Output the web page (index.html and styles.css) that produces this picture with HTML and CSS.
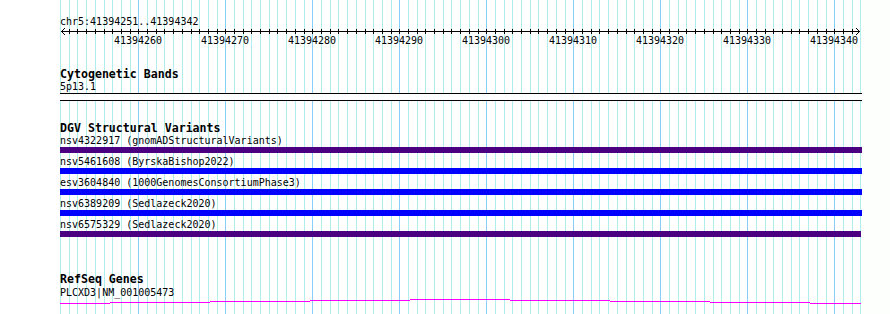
FILE: index.html
```html
<!DOCTYPE html>
<html lang="en">
<head>
<meta charset="UTF-8" />
<title>chr5:41394251..41394342</title>
<link rel="stylesheet" href="styles.css">
</head>
<body>
  <div class="browser">
    <svg class="grid" id="grid" width="862" height="314"></svg>

    <div class="ruler">
      <div class="label">chr5:41394251..41394342</div>
      <svg class="axis" id="axis" width="802" height="8"></svg>
      <div class="ticklabels" id="ticklabels"></div>
    </div>

    <div class="track cyto">
      <div class="track-title">Cytogenetic Bands</div>
      <div class="label">5p13.1</div>
      <div class="band"></div>
    </div>

    <div class="track dgv">
      <div class="track-title">DGV Structural Variants</div>
      <div class="feature">
        <div class="label">nsv4322917 (gnomADStructuralVariants)</div>
        <div class="bar gainloss"></div>
      </div>
      <div class="feature">
        <div class="label">nsv5461608 (ByrskaBishop2022)</div>
        <div class="bar gain"></div>
      </div>
      <div class="feature">
        <div class="label">esv3604840 (1000GenomesConsortiumPhase3)</div>
        <div class="bar gain"></div>
      </div>
      <div class="feature">
        <div class="label">nsv6389209 (Sedlazeck2020)</div>
        <div class="bar gain"></div>
      </div>
      <div class="feature">
        <div class="label">nsv6575329 (Sedlazeck2020)</div>
        <div class="bar gainloss short"></div>
      </div>
    </div>

    <div class="track refseq">
      <div class="track-title">RefSeq Genes</div>
      <div class="label">PLCXD3|NM_001005473</div>
      <!-- intron line, drawn as a stepped hat -->
      <svg class="gene" width="802" height="8">
        <path d="M0 5.5H50M50 4.5H150M150 3.5H250M250 2.5H350M350 1.5H450M450 2.5H550M550 3.5H650M650 4.5H750M750 5.5H801"/>
      </svg>
    </div>
  </div>

  <script>
    var start = 41394251, end = 41394342;
    var left = 60, bp = 8.7;

    var grid = document.getElementById("grid");
    var axis = document.getElementById("axis");
    var labels = document.getElementById("ticklabels");

    var minor = "", major = "", ticks = "", text = "";
    for (var k = 0; k <= end - start + 1; k++) {
      var x = Math.round(k * bp);
      if ((start + k) % 10 == 0) {
        major += "M" + (x + left + 0.5) + " 0V314";
        text += '<span style="left:' + x + 'px">' + (start + k) + '</span>';
      } else {
        minor += "M" + (x + left + 0.5) + " 0V314";
      }
      if (k > 0 && k <= end - start) {
        ticks += "M" + (x + 0.5) + " 2V7";
      }
    }

    grid.innerHTML = '<path class="minor" d="' + minor + '"/><path class="major" d="' + major + '"/>';
    axis.innerHTML = '<path d="M1 4.5H800' + ticks + 'M5 1L1.5 4.5L5 8M796 1L799.5 4.5L796 8"/>';
    labels.innerHTML = text;
  </script>
</body>
</html>
```

FILE: styles.css
```css
body{
  margin: 0;
  background-color: #fcfffc;
  color: #000;
  font-family: "DejaVu Sans Mono", "Liberation Mono", monospace;
}

.browser{
  position: relative;
  width: 802px;
  height: 298px;
  padding: 16px 0 0 60px;
  background-color: #fff;
  overflow: hidden;
}

.grid{
  position: absolute;
  left: 0;
  top: 0;
  shape-rendering: crispEdges;
}
.grid .minor{
  stroke: #afeeee;
  stroke-width: 1;
}
.grid .major{
  stroke: #87cefa;
  stroke-width: 1;
}

.ruler,
.track{
  position: relative;
}

.label{
  font-size: 10px;
  line-height: 11px;
  white-space: pre;
}

.track-title{
  font-size: 11.6px;
  line-height: 12px;
  font-weight: bold;
  white-space: pre;
}

.axis{
  display: block;
  shape-rendering: crispEdges;
}
.axis path{
  stroke: #000;
  stroke-width: 1;
  fill: none;
}

.ticklabels{
  position: relative;
  height: 11px;
  font-size: 10px;
  line-height: 11px;
}
.ticklabels span{
  position: absolute;
  top: 0;
  transform: translateX(-50%);
}

.cyto{
  margin-top: 22px;
}
.cyto .label{
  margin-top: 1px;
}
.band{
  margin-top: 1px;
  height: 6px;
  border-top: 1px solid #000;
  border-bottom: 1px solid #000;
  background-color: #fff;
}

.dgv{
  margin-top: 21px;
  padding-bottom: 3px;
}
.dgv .track-title{
  margin-bottom: 1px;
}
.feature{
  padding-bottom: 3px;
}
.feature:last-child{
  padding-bottom: 0;
}
.bar{
  height: 6px;
  margin-top: 1px;
}
.gainloss{
  background-color: #4b0082;
}
.gain{
  background-color: #0000ff;
}
.short{
  width: 801px;
}

.refseq{
  margin-top: 33px;
}
.refseq .label{
  margin-top: 2px;
}
.gene{
  display: block;
  shape-rendering: crispEdges;
}
.gene path{
  stroke: #ff00ff;
  stroke-width: 1;
  fill: none;
}
```
